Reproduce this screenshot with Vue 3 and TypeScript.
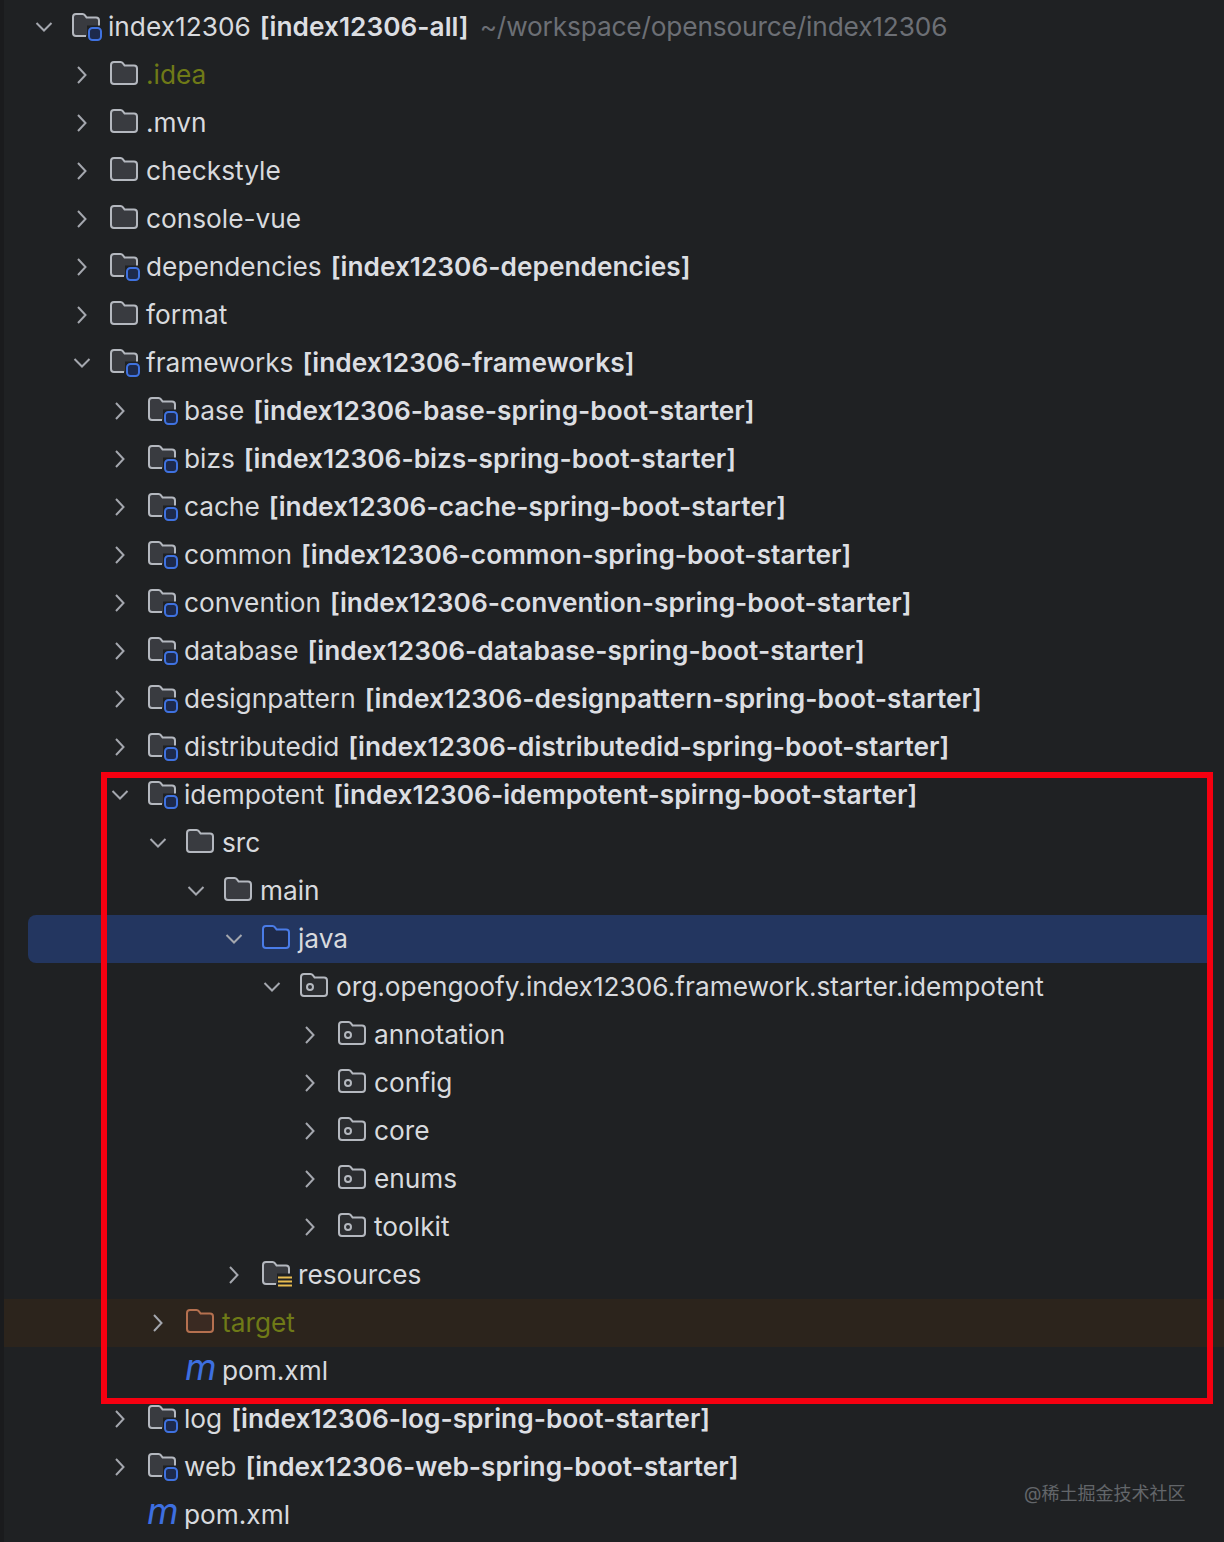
<script setup lang="ts">
type Kind = 'folder' | 'module' | 'package' | 'resources' | 'selected' | 'excluded' | 'maven'

type Row = {
  level: number
  kind: Kind
  name: string
  open?: boolean
  leaf?: boolean
  module?: string
  path?: string
  tone?: 'ignored'
  state?: 'selected' | 'target'
}

const rows: Row[] = [
  { level: 0, kind: 'module', name: 'index12306', open: true, module: '[index12306-all]', path: '~/workspace/opensource/index12306' },
  { level: 1, kind: 'folder', name: '.idea', tone: 'ignored' },
  { level: 1, kind: 'folder', name: '.mvn' },
  { level: 1, kind: 'folder', name: 'checkstyle' },
  { level: 1, kind: 'folder', name: 'console-vue' },
  { level: 1, kind: 'module', name: 'dependencies', module: '[index12306-dependencies]' },
  { level: 1, kind: 'folder', name: 'format' },
  { level: 1, kind: 'module', name: 'frameworks', open: true, module: '[index12306-frameworks]' },
  { level: 2, kind: 'module', name: 'base', module: '[index12306-base-spring-boot-starter]' },
  { level: 2, kind: 'module', name: 'bizs', module: '[index12306-bizs-spring-boot-starter]' },
  { level: 2, kind: 'module', name: 'cache', module: '[index12306-cache-spring-boot-starter]' },
  { level: 2, kind: 'module', name: 'common', module: '[index12306-common-spring-boot-starter]' },
  { level: 2, kind: 'module', name: 'convention', module: '[index12306-convention-spring-boot-starter]' },
  { level: 2, kind: 'module', name: 'database', module: '[index12306-database-spring-boot-starter]' },
  { level: 2, kind: 'module', name: 'designpattern', module: '[index12306-designpattern-spring-boot-starter]' },
  { level: 2, kind: 'module', name: 'distributedid', module: '[index12306-distributedid-spring-boot-starter]' },
  { level: 2, kind: 'module', name: 'idempotent', open: true, module: '[index12306-idempotent-spirng-boot-starter]' },
  { level: 3, kind: 'folder', name: 'src', open: true },
  { level: 4, kind: 'folder', name: 'main', open: true },
  { level: 5, kind: 'selected', name: 'java', open: true, state: 'selected' },
  { level: 6, kind: 'package', name: 'org.opengoofy.index12306.framework.starter.idempotent', open: true },
  { level: 7, kind: 'package', name: 'annotation' },
  { level: 7, kind: 'package', name: 'config' },
  { level: 7, kind: 'package', name: 'core' },
  { level: 7, kind: 'package', name: 'enums' },
  { level: 7, kind: 'package', name: 'toolkit' },
  { level: 5, kind: 'resources', name: 'resources' },
  { level: 3, kind: 'excluded', name: 'target', tone: 'ignored', state: 'target' },
  { level: 3, kind: 'maven', name: 'pom.xml', leaf: true },
  { level: 2, kind: 'module', name: 'log', module: '[index12306-log-spring-boot-starter]' },
  { level: 2, kind: 'module', name: 'web', module: '[index12306-web-spring-boot-starter]' },
  { level: 2, kind: 'maven', name: 'pom.xml', leaf: true },
]

// rows with a background start further right than the tree edge
const insets: Record<string, number> = { selected: 28, target: 4 }

function indent(row: Row) {
  return 32 + row.level * 38 - (row.state ? insets[row.state] : 0) + 'px'
}

const folderPath = 'M4 1H10.5C11.6 1 12.4 1.5 13 2.3L14.6 4.5H24C25.7 4.5 27 5.8 27 7.5V20C27 21.7 25.7 23 24 23H4C2.3 23 1 21.7 1 20V4C1 2.3 2.3 1 4 1Z'
const modulePath = 'M14 23H4C2.3 23 1 21.7 1 20V4C1 2.3 2.3 1 4 1H10.5C11.6 1 12.4 1.5 13 2.3L14.6 4.5H24C25.7 4.5 27 5.8 27 7.5V12.5'
</script>

<template>
  <div class="tree">
    <div
      v-for="(row, i) in rows"
      :key="i"
      class="row"
      :class="row.state"
      :style="{ paddingLeft: indent(row) }"
    >
      <span class="arrow">
        <svg v-if="!row.leaf" width="24" height="24" viewBox="0 0 24 24">
          <path v-if="row.open" d="M4.5 8L12 15.5L19.5 8" />
          <path v-else d="M8 4L15.5 12L8 20" />
        </svg>
      </span>
      <span class="icon">
        <span v-if="row.kind === 'maven'" class="maven-m">m</span>
        <svg v-else width="34" height="30" viewBox="0 -1 34 30">
          <template v-if="row.kind === 'module'">
            <path :d="modulePath + 'H15V23Z'" class="fill" />
            <path :d="modulePath" class="line" />
            <rect x="17" y="15" width="12" height="12" rx="3.5" class="badge" />
          </template>
          <template v-else-if="row.kind === 'resources'">
            <path :d="modulePath + 'H15V23Z'" class="fill" />
            <path :d="modulePath" class="line" />
            <path d="M16 16.5H30M16 20.5H30M16 24.5H30" class="lines" />
          </template>
          <template v-else>
            <path :d="folderPath" class="folder" :class="row.kind" />
            <circle v-if="row.kind === 'package'" cx="10" cy="14" r="3" class="dot" />
          </template>
        </svg>
      </span>
      <span class="label" :class="row.tone">{{ row.name }}</span>
      <span v-if="row.module" class="mod">{{ row.module }}</span>
      <span v-if="row.path" class="path">{{ row.path }}</span>
    </div>

    <div class="highlight"></div>
    <div class="watermark">@稀土掘金技术社区</div>
  </div>
</template>

<style scoped>
.tree {
  position: relative;
  box-sizing: border-box;
  width: 1224px;
  height: 1542px;
  padding-top: 3px;
  overflow: hidden;
  background: #1f2123;
  border-left: 4px solid #1a1b1d;
  font-family: Inter, "Noto Sans CJK SC", sans-serif;
  font-size: 26.25px;
  color: #d8dade;
}

.row {
  display: flex;
  align-items: center;
  height: 48px;
  margin-left: -4px;
  white-space: nowrap;
}

.row.selected {
  margin-left: 24px;
  margin-right: 17px;
  background: #233660;
  border-radius: 8px 0 0 8px;
}

.row.target {
  margin-left: 0;
  background: #2c241c;
}

.arrow {
  display: flex;
  flex: none;
  width: 24px;
  height: 24px;
  margin-right: 16px;
}

.arrow path {
  fill: none;
  stroke: #a4a7ae;
  stroke-width: 2;
}

.icon {
  display: flex;
  flex: none;
  align-items: center;
  width: 36px;
  height: 30px;
}

.fill {
  fill: #393b40;
}

.line {
  fill: none;
  stroke: #b4b8bf;
  stroke-width: 2;
}

.folder {
  fill: #393b40;
  stroke: #b4b8bf;
  stroke-width: 2;
}

.folder.selected {
  fill: #1e2a4a;
  stroke: #4a7ce8;
}

.folder.excluded {
  fill: #3a2a22;
  stroke: #b5704f;
}

.folder.package {
  fill: #2b2d30;
}

.dot {
  fill: none;
  stroke: #b4b8bf;
  stroke-width: 2;
}

.badge {
  fill: #1d2a4c;
  stroke: #3f72e0;
  stroke-width: 2;
}

.lines {
  fill: none;
  stroke: #e8bc50;
  stroke-width: 2;
}

.maven-m {
  margin-left: -1px;
  padding-bottom: 9px;
  font-size: 36px;
  line-height: 30px;
  font-style: italic;
  color: #3d6fe0;
}

.label,
.mod,
.path {
  padding-bottom: 2px;
}

.label.ignored {
  color: #6f7a17;
}

.mod {
  margin-left: 9px;
  font-weight: 600;
  letter-spacing: 0.03px;
  color: #dcdee2;
}

.path {
  margin-left: 11px;
  letter-spacing: -0.15px;
  color: #6c6f75;
}

.highlight {
  position: absolute;
  left: 97px;
  top: 772px;
  box-sizing: border-box;
  width: 1112px;
  height: 632px;
  border: 6px solid #f60010;
  pointer-events: none;
}

.watermark {
  position: absolute;
  left: 1020px;
  top: 1479px;
  font-size: 18px;
  color: #63666a;
}
</style>

<style>
body {
  background: #1f2123;
}
</style>
